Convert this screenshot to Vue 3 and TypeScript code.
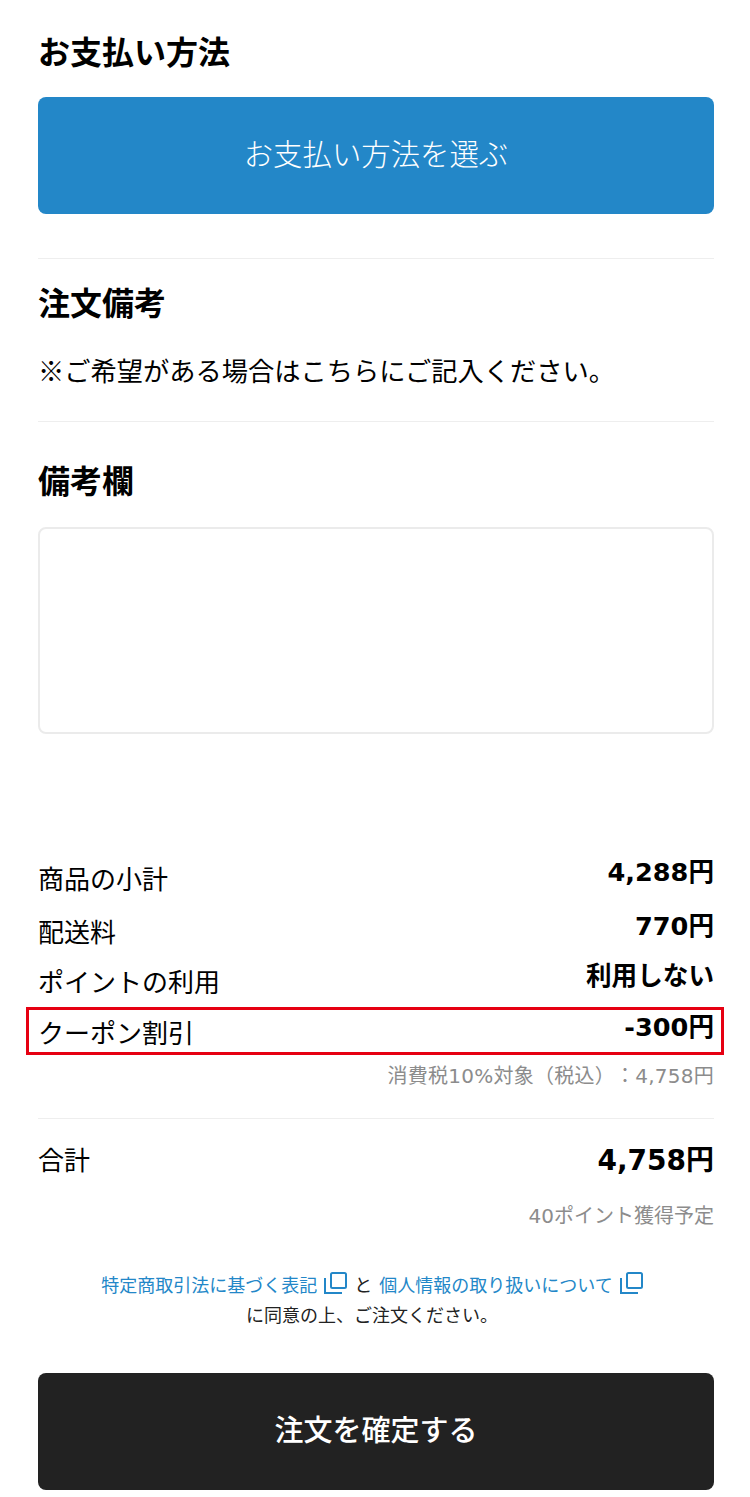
<script setup lang="ts">
interface Row { label: string; value: string; highlighted?: boolean }
const rows: Row[] = [
  { label: '商品の小計', value: '4,288円' },
  { label: '配送料', value: '770円' },
  { label: 'ポイントの利用', value: '利用しない' },
  { label: 'クーポン割引', value: '-300円', highlighted: true },
]
</script>

<template>
  <main class="page">
    <section class="payment">
      <h2 class="heading">お支払い方法</h2>
      <button class="pay-button" type="button">お支払い方法を選ぶ</button>
    </section>
    <section class="notes">
      <h2 class="heading">注文備考</h2>
      <p class="hint">※ご希望がある場合はこちらにご記入ください。</p>
    </section>
    <section class="remarks">
      <h2 class="heading">備考欄</h2>
      <textarea class="remarks-box"></textarea>
    </section>
    <section class="summary">
      <div v-for="row in rows" :key="row.label" class="row" :class="{ highlighted: row.highlighted }">
        <span class="row-label">{{ row.label }}</span>
        <strong class="row-value">{{ row.value }}</strong>
      </div>
      <p class="note tax">消費税10%対象（税込）：4,758円</p>
    </section>
    <section class="total">
      <div class="total-row">
        <span class="total-label">合計</span>
        <strong class="total-value">4,758円</strong>
      </div>
      <p class="note points">40ポイント獲得予定</p>
    </section>
    <section class="agreement">
      <p class="links">
        <a class="link">特定商取引法に基づく表記</a>
        <svg class="copy" viewBox="0 0 23 22" fill="none" aria-hidden="true">
          <path d="M1 6v15h17" stroke="#2387c8" stroke-width="2" />
          <rect x="7" y="1" width="15" height="15" rx="1.5" stroke="#2387c8" stroke-width="2" />
        </svg>
        <span class="and">と</span>
        <a class="link">個人情報の取り扱いについて</a>
        <svg class="copy" viewBox="0 0 23 22" fill="none" aria-hidden="true">
          <path d="M1 6v15h17" stroke="#2387c8" stroke-width="2" />
          <rect x="7" y="1" width="15" height="15" rx="1.5" stroke="#2387c8" stroke-width="2" />
        </svg>
      </p>
      <p class="consent">に同意の上、ご注文ください。</p>
    </section>
    <button class="confirm" type="button">注文を確定する</button>
  </main>
</template>

<style scoped>
.page {
  width: 750px;
  height: 1497px;
  box-sizing: border-box;
  padding: 0 36px 0 38px;
  background: #fff;
  color: #000;
  font-family: "Noto Sans CJK JP", sans-serif;
  text-spacing-trim: space-all;
  overflow: hidden;
}
.heading {
  margin: 0;
  font-size: 32px;
  line-height: 44px;
  font-weight: 700;
}
.payment {
  padding: 28px 0 44px;
  border-bottom: 1px solid #eeeeee;
}
.pay-button {
  display: block;
  width: 100%;
  height: 117px;
  margin-top: 25px;
  padding: 0 0 8px;
  border: 0;
  border-radius: 8px;
  background: #2387c8;
  color: #fff;
  font-family: inherit;
  font-size: 29.4px;
  font-weight: 300;
}
.notes {
  padding: 20px 0 31px;
  border-bottom: 1px solid #eeeeee;
}
.hint {
  margin: 27px 0 0;
  font-size: 26.25px;
  line-height: 40px;
}
.remarks {
  padding-top: 35px;
}
.remarks-box {
  display: block;
  width: 100%;
  height: 207px;
  box-sizing: border-box;
  margin-top: 26px;
  border: 2px solid #ebebeb;
  border-radius: 8px;
  resize: none;
  background: #fff;
}
.summary {
  margin-top: 118px;
  padding-bottom: 28px;
  border-bottom: 1px solid #eeeeee;
}
.row {
  display: flex;
  justify-content: space-between;
  align-items: flex-start;
  height: 51px;
}
.row:first-child {
  height: 54px;
}
.row:nth-child(2) {
  height: 50px;
}
.row-label {
  margin-top: 6px;
  font-size: 26px;
  line-height: 38px;
}
.row:first-child .row-label {
  margin-top: 7px;
}
.row-value {
  margin-top: 1px;
  font-family: "DejaVu Sans", "Noto Sans CJK JP", sans-serif;
  font-size: 25.6px;
  line-height: 38px;
  font-weight: 700;
}
.highlighted {
  height: 48px;
  box-sizing: border-box;
  margin: 0 -10px 0 -12px;
  padding: 0 7px 0 9px;
  border: 3px solid #e60012;
}
.highlighted .row-label {
  margin-top: 3px;
}
.highlighted .row-value {
  margin-top: -2px;
}
.note {
  margin: 0;
  text-align: right;
  color: #8c8c8c;
  font-family: "DejaVu Sans", "Noto Sans CJK JP", sans-serif;
  font-size: 20px;
  line-height: 28px;
}
.tax {
  margin-top: 7px;
  letter-spacing: 0.25px;
}
.total {
  padding-top: 20px;
}
.total-row {
  display: flex;
  justify-content: space-between;
  align-items: flex-start;
}
.total-label {
  font-size: 26px;
  line-height: 40px;
}
.total-value {
  font-family: "DejaVu Sans", "Noto Sans CJK JP", sans-serif;
  font-size: 28px;
  line-height: 44px;
  font-weight: 700;
}
.points {
  margin-top: 19px;
}
.agreement {
  margin-top: 39px;
  text-align: center;
}
.links {
  display: flex;
  justify-content: center;
  align-items: center;
  gap: 7px;
  margin: 0;
  padding-right: 8px;
  height: 30px;
  font-size: 18px;
  line-height: 30px;
}
.link {
  color: #2387c8;
}
.and {
  color: #222;
}
.copy {
  width: 23px;
  height: 22px;
  margin-top: -3px;
}
.consent {
  margin: 0;
  padding-right: 8px;
  font-size: 18px;
  line-height: 30px;
  color: #222;
}
.confirm {
  display: block;
  width: 100%;
  height: 117px;
  margin-top: 44px;
  padding: 0 0 8px;
  border: 0;
  border-radius: 8px;
  background: #222;
  color: #fff;
  font-family: inherit;
  font-size: 29px;
  font-weight: 500;
}
</style>
